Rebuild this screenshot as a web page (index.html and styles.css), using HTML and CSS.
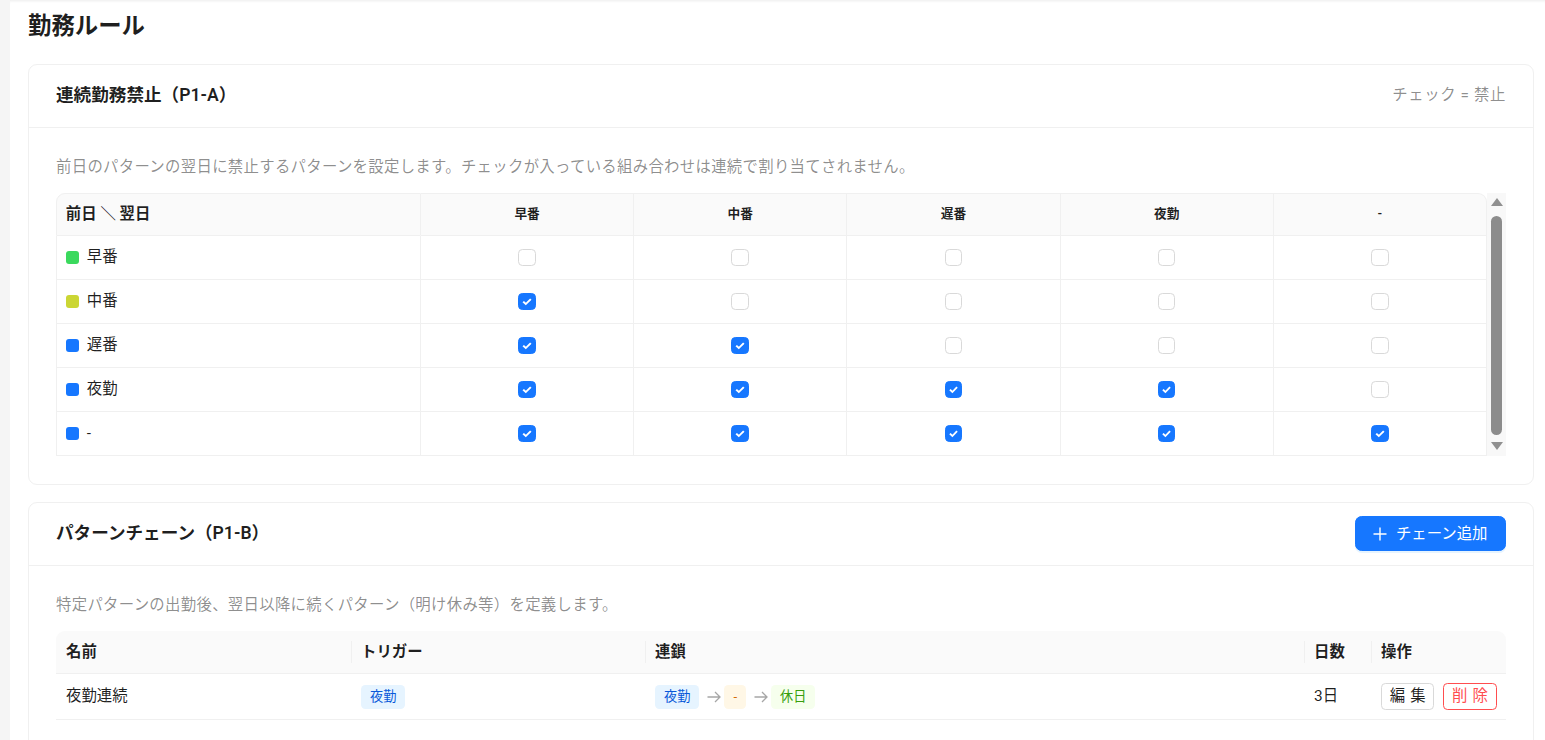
FILE: index.html
```html
<!DOCTYPE html>
<html lang="ja">
<head>
	<meta charset="UTF-8">
	<meta name="viewport" content="width=device-width, initial-scale=1.0">
	<title>勤務ルール</title>
	<link rel="stylesheet" href="styles.css">
</head>
<body>
	<div class="layout">
		<aside class="sider"></aside>
		<main class="content">
			<h1 class="page-title">勤務ルール</h1>

			<section class="card">
				<div class="card-head">
					<h2 class="card-title">連続勤務禁止（P1-A）</h2>
					<span class="muted legend">チェック = 禁止</span>
				</div>
				<div class="card-body">
					<p class="muted desc">前日のパターンの翌日に禁止するパターンを設定します。チェックが入っている組み合わせは連続で割り当てされません。</p>
					<div class="matrix-wrap">
						<div class="matrix-main">
							<table class="matrix">
								<colgroup>
									<col class="col-label">
									<col span="5">
								</colgroup>
								<thead>
									<tr>
										<th class="corner">前日 ＼ 翌日</th>
										<th>早番</th>
										<th>中番</th>
										<th>遅番</th>
										<th>夜勤</th>
										<th>-</th>
									</tr>
								</thead>
								<tbody>
									<tr>
										<td><span class="pat"><i class="swatch green"></i>早番</span></td>
										<td><input type="checkbox"></td>
										<td><input type="checkbox"></td>
										<td><input type="checkbox"></td>
										<td><input type="checkbox"></td>
										<td><input type="checkbox"></td>
									</tr>
									<tr>
										<td><span class="pat"><i class="swatch lime"></i>中番</span></td>
										<td><input type="checkbox" checked></td>
										<td><input type="checkbox"></td>
										<td><input type="checkbox"></td>
										<td><input type="checkbox"></td>
										<td><input type="checkbox"></td>
									</tr>
									<tr>
										<td><span class="pat"><i class="swatch blue"></i>遅番</span></td>
										<td><input type="checkbox" checked></td>
										<td><input type="checkbox" checked></td>
										<td><input type="checkbox"></td>
										<td><input type="checkbox"></td>
										<td><input type="checkbox"></td>
									</tr>
									<tr>
										<td><span class="pat"><i class="swatch blue"></i>夜勤</span></td>
										<td><input type="checkbox" checked></td>
										<td><input type="checkbox" checked></td>
										<td><input type="checkbox" checked></td>
										<td><input type="checkbox" checked></td>
										<td><input type="checkbox"></td>
									</tr>
									<tr>
										<td><span class="pat"><i class="swatch blue"></i>-</span></td>
										<td><input type="checkbox" checked></td>
										<td><input type="checkbox" checked></td>
										<td><input type="checkbox" checked></td>
										<td><input type="checkbox" checked></td>
										<td><input type="checkbox" checked></td>
									</tr>
								</tbody>
							</table>
						</div>
						<div class="scrollbar" aria-hidden="true">
							<span class="sb-btn"><i class="tri up"></i></span>
							<span class="sb-track"><i class="sb-thumb"></i></span>
							<span class="sb-btn"><i class="tri down"></i></span>
						</div>
					</div>
				</div>
			</section>

			<section class="card">
				<div class="card-head">
					<h2 class="card-title">パターンチェーン（P1-B）</h2>
					<button class="btn primary">
						<svg width="14" height="14" viewBox="0 0 14 14"><path d="M7 0.5V13.5M0.5 7H13.5" stroke="#fff" stroke-width="1.4" fill="none"/></svg>
						<span>チェーン追加</span>
					</button>
				</div>
				<div class="card-body">
					<p class="muted desc">特定パターンの出勤後、翌日以降に続くパターン（明け休み等）を定義します。</p>
					<table class="chains">
						<colgroup>
							<col class="c-name">
							<col class="c-trigger">
							<col>
							<col class="c-days">
							<col class="c-ops">
						</colgroup>
						<thead>
							<tr>
								<th>名前</th>
								<th>トリガー</th>
								<th>連鎖</th>
								<th>日数</th>
								<th>操作</th>
							</tr>
						</thead>
						<tbody>
							<tr>
								<td>夜勤連続</td>
								<td><span class="tag blue">夜勤</span></td>
								<td>
									<div class="chain">
										<span class="tag blue">夜勤</span>
										<svg class="arrow" width="14" height="12" viewBox="0 0 14 12"><path d="M0.5 6H13M8 1L13 6L8 11" stroke="#a6a6a6" stroke-width="1.3" fill="none"/></svg>
										<span class="tag orange">-</span>
										<svg class="arrow" width="14" height="12" viewBox="0 0 14 12"><path d="M0.5 6H13M8 1L13 6L8 11" stroke="#a6a6a6" stroke-width="1.3" fill="none"/></svg>
										<span class="tag green">休日</span>
									</div>
								</td>
								<td>3日</td>
								<td>
									<div class="ops">
										<button class="btn small"><span class="two">編集</span></button>
										<button class="btn small danger"><span class="two">削除</span></button>
									</div>
								</td>
							</tr>
						</tbody>
					</table>
				</div>
			</section>
		</main>
	</div>
</body>
</html>
```

FILE: styles.css
```css
* { box-sizing: border-box; margin: 0; padding: 0; }
html, body { height: 100%; }

body {
	font-family: Roboto, "Noto Sans CJK JP", sans-serif;
	font-size: 15.4px;
	line-height: 1.5714;
	color: rgba(0, 0, 0, 0.88);
	background: #f5f5f5;
	overflow: hidden;
}

.layout {
	display: flex;
	height: 100vh;
}

.sider { width: 10px; flex: none; }

.content {
	flex: 1;
	background: #fff;
	padding: 11px 11px 0 18px;
	overflow: hidden;
	box-shadow: inset 0 3px 3px -2px rgba(0, 0, 0, 0.08);
}

.page-title {
	font-size: 23.4px;
	font-weight: 600;
	line-height: 1.35;
	margin-bottom: 21px;
}

.muted { color: rgba(0, 0, 0, 0.45); }
.legend { letter-spacing: 0.6px; }

/* cards */
.card {
	border: 1px solid #f0f0f0;
	border-radius: 9px;
	background: #fff;
}
.card + .card { margin-top: 17px; }

.card-head {
	display: flex;
	align-items: center;
	justify-content: space-between;
	min-height: 63px;
	padding: 0 27px;
	border-bottom: 1px solid #f0f0f0;
}

.card-title {
	font-size: 17.6px;
	font-weight: 600;
}

.card-body { padding: 27px 27px 28px; }
.desc { margin-bottom: 14px; letter-spacing: 0.3px; }

/* buttons */
.btn {
	display: inline-flex;
	align-items: center;
	justify-content: center;
	white-space: nowrap;
	font: inherit;
	cursor: pointer;
	background: #fff;
	border: 1px solid #d9d9d9;
	color: rgba(0, 0, 0, 0.88);
}

.primary {
	gap: 8.8px;
	height: 35.2px;
	padding: 0 17.5px;
	background: #1677ff;
	border-color: #1677ff;
	color: #fff;
	border-radius: 6.6px;
	box-shadow: 0 2px 0 rgba(5, 145, 255, 0.1);
}

.small {
	height: 26.4px;
	padding: 0 7.7px;
	border-radius: 4.4px;
}
.danger { border-color: #ff4d4f; color: #ff4d4f; }
.two { letter-spacing: 0.34em; margin-right: -0.34em; }

.ops { display: flex; gap: 8.8px; }

/* prohibition matrix */
.matrix-wrap {
	display: flex;
	align-items: stretch;
}
.matrix-main { flex: 1; min-width: 0; }

.scrollbar {
	flex: none;
	width: 19px;
	display: flex;
	flex-direction: column;
	background: #f8f8f8;
}
.sb-btn {
	height: 19px;
	display: flex;
	align-items: center;
	justify-content: center;
}
.sb-track {
	flex: 1;
	display: flex;
	padding: 4px 4px 2px;
}
.sb-thumb {
	flex: 1;
	background: #8c8c8c;
	border-radius: 6px;
}
.tri {
	width: 0;
	height: 0;
	border-left: 6px solid transparent;
	border-right: 6px solid transparent;
}
.tri.up { border-bottom: 8px solid #909090; }
.tri.down { border-top: 8px solid #909090; }

.matrix {
	width: 100%;
	table-layout: fixed;
	border-collapse: separate;
	border-spacing: 0;
}
.matrix .col-label { width: 365px; }

.matrix th,
.matrix td {
	border-right: 1px solid #f0f0f0;
	border-bottom: 1px solid #f0f0f0;
	padding: 0 8.8px;
	text-align: center;
	vertical-align: middle;
}
.matrix th:first-child,
.matrix td:first-child {
	border-left: 1px solid #f0f0f0;
	text-align: left;
}

.matrix th {
	height: 43px;
	border-top: 1px solid #f0f0f0;
	background: #fafafa;
	font-size: 12.7px;
	font-weight: 600;
}
.matrix th.corner { font-size: 15.4px; border-top-left-radius: 9px; }
.matrix th:last-child { border-top-right-radius: 9px; }
.matrix td { height: 44px; }

.pat {
	display: flex;
	align-items: center;
	gap: 8px;
}

.swatch {
	width: 13px;
	height: 13px;
	border-radius: 3px;
}
.swatch.green { background: #3ad95d; }
.swatch.lime { background: #cbd634; }
.swatch.blue { background: #1677ff; }

.matrix input[type="checkbox"] {
	appearance: none;
	display: block;
	margin: 0 auto;
	width: 17.6px;
	height: 17.6px;
	border: 1px solid #d9d9d9;
	border-radius: 4.4px;
	background: #fff;
}
.matrix input[type="checkbox"]:checked {
	background: #1677ff url("data:image/svg+xml,%3Csvg xmlns='http://www.w3.org/2000/svg' viewBox='0 0 16 16'%3E%3Cpath d='M4.2 8.1l2.6 2.6 5-5.2' fill='none' stroke='white' stroke-width='2'/%3E%3C/svg%3E") center / 100% no-repeat;
	border-color: #1677ff;
}

/* chain table */
.chains {
	width: 100%;
	table-layout: fixed;
	border-collapse: separate;
	border-spacing: 0;
}
.chains .c-name { width: 295px; }
.chains .c-trigger { width: 294px; }
.chains .c-days { width: 67px; }
.chains .c-ops { width: 135px; }

.chains th,
.chains td {
	padding: 0 10px;
	text-align: left;
	vertical-align: middle;
	border-bottom: 1px solid #f0f0f0;
}

.chains th {
	height: 43px;
	font-weight: 600;
	background: linear-gradient(#f0f0f0, #f0f0f0) 0 50% / 1px 22px no-repeat, #fafafa;
}
.chains th:first-child { background: #fafafa; border-top-left-radius: 9px; }
.chains th:last-child { border-top-right-radius: 9px; }
.chains td { height: 46px; }

.chain {
	display: flex;
	align-items: center;
}
.arrow { margin: 0 3px 0 8px; flex: none; }

.tag {
	display: inline-block;
	padding: 0 8px;
	font-size: 13.2px;
	line-height: 22px;
	border: 1px solid transparent;
	border-radius: 4.4px;
}
.tag.blue { background: #e6f4ff; color: #0958d9; }
.tag.orange { background: #fff7e6; color: #d46b08; }
.tag.green { background: #f6ffed; color: #389e0d; }
```
